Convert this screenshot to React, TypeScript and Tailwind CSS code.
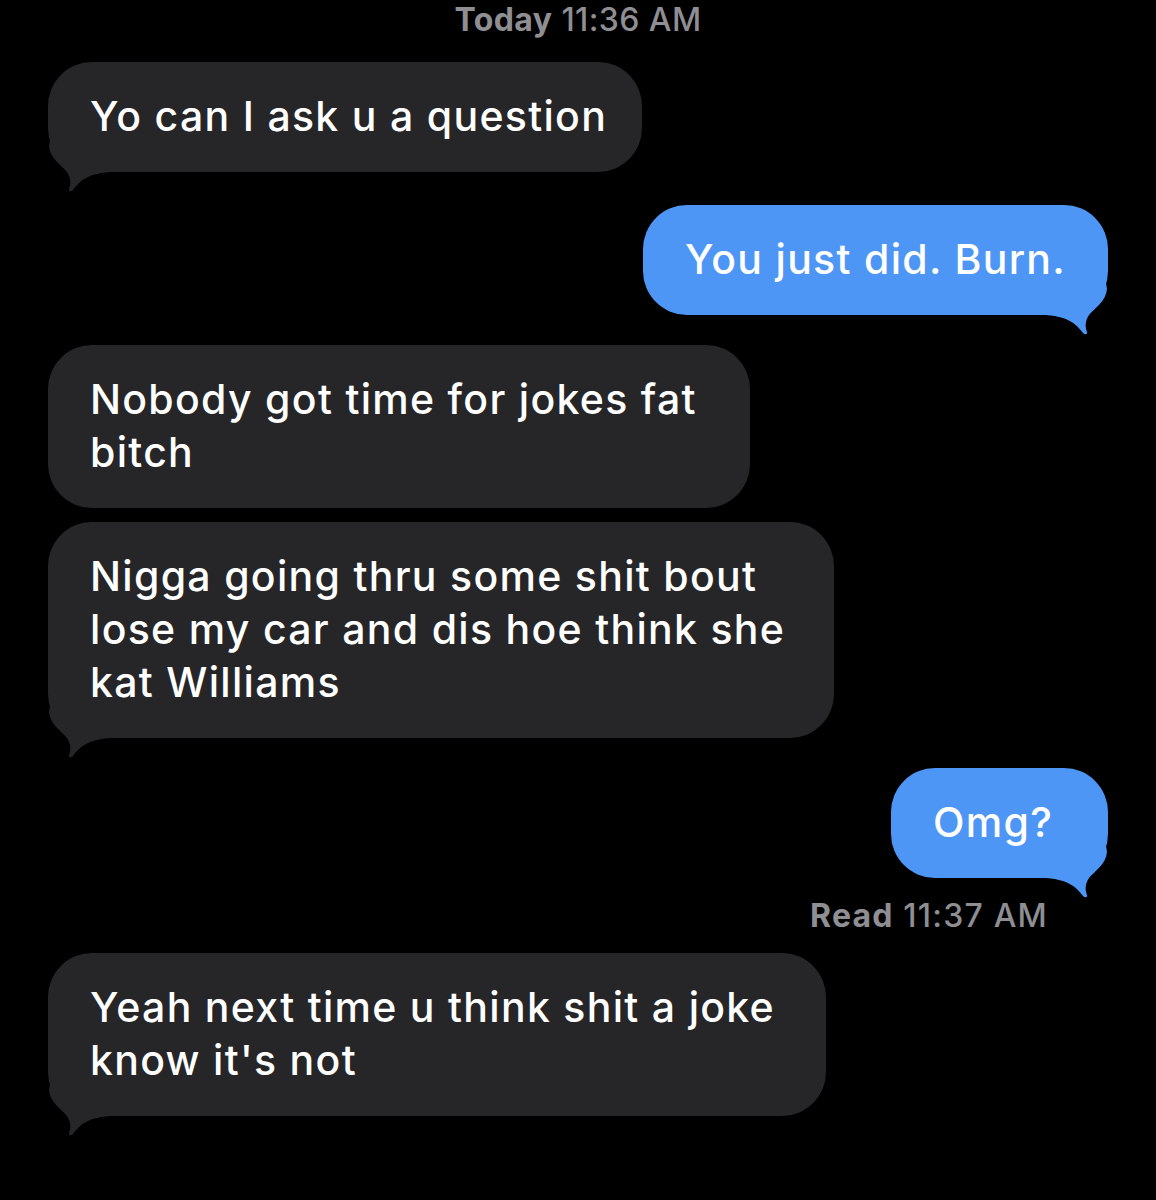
import React from 'react';

type Msg = {
  from: 'them' | 'me';
  lines: string[];
  width: string;
  tail: boolean;
  gap: string;
};

const messages: Msg[] = [
  { from: 'them', lines: ['Yo can I ask u a question'], width: 'w-[594px]', tail: true, gap: 'mt-[22px]' },
  { from: 'me', lines: ['You just did. Burn.'], width: 'w-[465px]', tail: true, gap: 'mt-[33px]' },
  { from: 'them', lines: ['Nobody got time for jokes fat', 'bitch'], width: 'w-[702px]', tail: false, gap: 'mt-[30px]' },
  {
    from: 'them',
    lines: ['Nigga going thru some shit bout', 'lose my car and dis hoe think she', 'kat Williams'],
    width: 'w-[786px]',
    tail: true,
    gap: 'mt-[14px]',
  },
  { from: 'me', lines: ['Omg?'], width: 'w-[217px]', tail: true, gap: 'mt-[30px]' },
];

const lastMsg: Msg = {
  from: 'them',
  lines: ['Yeah next time u think shit a joke', "know it's not"],
  width: 'w-[778px]',
  tail: true,
  gap: 'mt-[17px]',
};

// iMessage style tail, drawn for the left side; mirrored for the right
const Tail = ({ side, color }: { side: 'left' | 'right'; color: string }) => (
  <svg
    width="64"
    height="52"
    viewBox="0 0 64 52"
    className={
      side === 'left'
        ? 'absolute left-0 bottom-[-20px]'
        : 'absolute right-0 bottom-[-20px] -scale-x-100'
    }
  >
    <path
      d="M2 0 L1 6 C2 18 13 25 19 32 C23 38 23 44 21 49 C20 51.5 23 52 25 50 C30 44 36 34 62 32 L62 0 Z"
      fill={color}
    />
  </svg>
);

const Bubble = ({ msg }: { msg: Msg }) => {
  const mine = msg.from === 'me';
  return (
    <div className={`flex ${mine ? 'justify-end' : 'justify-start'} ${msg.gap}`}>
      <div
        className={`relative ${msg.width} rounded-[44px] pl-[42px] pr-[20px] pt-[28px] pb-[29px] text-[41px] font-medium tracking-[1.3px] leading-[53px] text-white ${
          mine ? 'bg-[#4d96f6]' : 'bg-[#262629]'
        }`}
      >
        {msg.tail && <Tail side={mine ? 'right' : 'left'} color={mine ? '#4d96f6' : '#262629'} />}
        <div className="relative whitespace-nowrap">
          {msg.lines.map((l, i) => (
            <div key={i}>{l}</div>
          ))}
        </div>
      </div>
    </div>
  );
};

export default function App() {
  return (
    <div
      className="w-[1156px] h-[1200px] bg-black overflow-hidden px-[48px]"
      style={{ fontFamily: 'Inter, "Liberation Sans", sans-serif' }}
    >
      <div className="text-center text-[32px] leading-[40px] font-medium tracking-[0.4px] text-[#8e8e93]">
        <span className="font-bold">Today</span> 11:36 AM
      </div>

      {messages.map((m, i) => (
        <Bubble key={i} msg={m} />
      ))}

      <div className="mt-[18px] flex justify-end pr-[60px] text-[32px] leading-[40px] font-medium tracking-[1.2px] text-[#8e8e93]">
        <span>
          <span className="font-bold">Read</span> 11:37 AM
        </span>
      </div>

      <Bubble msg={lastMsg} />
    </div>
  );
}
